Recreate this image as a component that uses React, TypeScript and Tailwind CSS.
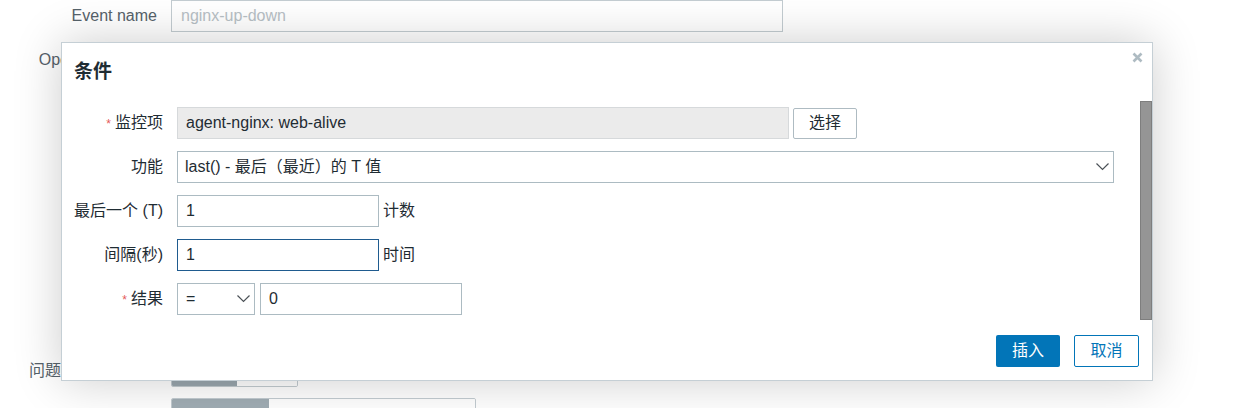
import { ReactNode } from 'react';

const font = { fontFamily: '"Liberation Sans", Arial, "Noto Sans CJK SC", sans-serif' };

const Chevron = ({ className }: { className?: string }) => (
  <svg width="13" height="8" viewBox="0 0 13 8" className={className}>
    <polyline points="0.5,0.5 6.5,6.5 12.5,0.5" fill="none" stroke="#4b5157" strokeWidth="1.2" />
  </svg>
);

const Row = ({ label, required, children }: { label: string; required?: boolean; children: ReactNode }) => (
  <div className="flex items-center h-[32px]">
    <div className="w-[90px] text-right text-[#1f2c33] whitespace-nowrap">
      {required && <span className="text-[#e45959] text-[12px] mr-[4px]">*</span>}
      {label}
    </div>
    <div className="ml-[14px] flex items-center h-full">{children}</div>
  </div>
);

export default function App() {
  return (
    <div className="relative w-[1248px] h-[408px] bg-white overflow-hidden text-[16px]" style={font}>
      {/* page behind the dialog */}
      <div className="flex flex-col text-[#56626a]">
        <div className="flex items-center h-[32px]">
          <div className="w-[157px] text-right">Event name</div>
          <div className="ml-[14px] w-[612px] h-[32px] border border-[#c3ccd1] px-[9px] flex items-center text-[#b7c0c5]">
            nginx-up-down
          </div>
        </div>
        <div className="flex items-center h-[32px] mt-[12px]">
          <div className="w-[157px] text-right">Operational data</div>
        </div>
        <div className="flex items-center h-[32px] mt-[279px]">
          <div className="w-[157px] text-right whitespace-nowrap">问题事件生成模式</div>
          <div className="ml-[14px] w-[127px] h-[32px] flex border border-[#c3ccd1] rounded-[2px] overflow-hidden">
            <div className="w-[65px] bg-[#9aa7ae]" />
            <div className="flex-1 bg-white" />
          </div>
        </div>
        <div className="flex items-center h-[32px] mt-[11px]">
          <div className="w-[157px]" />
          <div className="ml-[14px] w-[305px] h-[32px] flex border border-[#c3ccd1] rounded-[2px] overflow-hidden">
            <div className="w-[97px] bg-[#a0adb4]" />
            <div className="flex-1 bg-white" />
          </div>
        </div>
      </div>

      {/* dialog */}
      <div className="absolute left-[61px] top-[42px] w-[1092px] h-[339px] bg-white border border-[#c5cfd5] shadow-[0_0_45px_rgba(0,0,0,0.2)] flex flex-col">
        <div className="flex items-start justify-between pl-[12px] pr-[9px] pt-[17px] h-[60px]">
          <h4 className="text-[19px] font-bold text-[#1f2c33] leading-[24px]">条件</h4>
          <svg width="11" height="11" viewBox="0 0 11 11" className="mt-[-8px]">
            <path d="M1.5 1.5 L9.5 9.5 M9.5 1.5 L1.5 9.5" stroke="#aebbc2" strokeWidth="2.6" />
          </svg>
        </div>

        <div className="relative flex-1">
          <div className="flex flex-col gap-[12px] pl-[11px] pt-[4px]">
            <Row label="监控项" required>
              <div className="w-[612px] h-[32px] bg-[#ebebeb] border border-[#d6d9db] px-[8px] flex items-center text-[#1f2c33]">
                agent-nginx: web-alive
              </div>
              <button className="ml-[4px] w-[64px] h-[31px] border border-[#aebbc2] rounded-[2px] bg-white text-[#1f2c33]">
                选择
              </button>
            </Row>
            <Row label="功能">
              <div className="w-[937px] h-[32px] border border-[#acbbc2] pl-[7px] pr-[4px] flex items-center justify-between text-[#1f2c33]">
                <span>last() - 最后（最近）的 T 值</span>
                <Chevron />
              </div>
            </Row>
            <Row label="最后一个 (T)">
              <div className="w-[202px] h-[32px] border border-[#acbbc2] px-[8px] flex items-center text-[#1f2c33]">1</div>
              <span className="ml-[4px] text-[#1f2c33]">计数</span>
            </Row>
            <Row label="间隔(秒)">
              <div className="w-[202px] h-[32px] border border-[#1f5b8f] px-[8px] flex items-center text-[#1f2c33]">1</div>
              <span className="ml-[4px] text-[#1f2c33]">时间</span>
            </Row>
            <Row label="结果" required>
              <div className="w-[78px] h-[32px] border border-[#acbbc2] pl-[8px] pr-[4px] flex items-center justify-between text-[#1f2c33]">
                <span>=</span>
                <Chevron />
              </div>
              <div className="ml-[5px] w-[202px] h-[32px] border border-[#acbbc2] px-[8px] flex items-center text-[#1f2c33]">0</div>
            </Row>
          </div>
          {/* scrollbar thumb */}
          <div className="absolute right-0 top-[-2px] w-[12px] h-[219px] bg-[#959595] border border-[#7e7e7e]" />
        </div>

        <div className="flex justify-end gap-[14px] pr-[13px] pb-[13px]">
          <button className="w-[64px] h-[32px] rounded-[2px] bg-[#0275b8] text-white">插入</button>
          <button className="w-[65px] h-[32px] rounded-[2px] border border-[#0275b8] bg-white text-[#0275b8]">取消</button>
        </div>
      </div>
    </div>
  );
}
